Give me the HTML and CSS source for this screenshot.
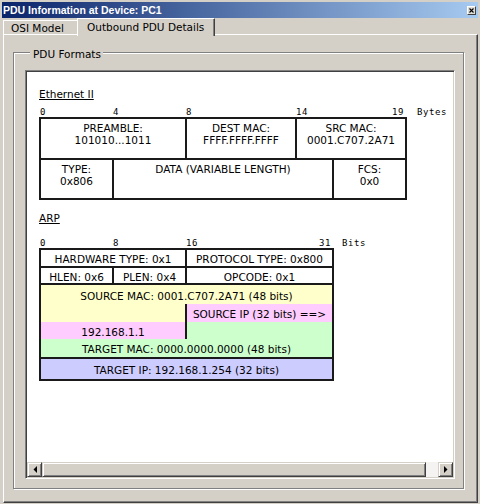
FILE: index.html
```html
<!DOCTYPE html>
<html>
<head>
<meta charset="utf-8">
<link rel="stylesheet" href="styles.css">
</head>
<body>
<div class="window">
  <div class="titlebar">
    <span class="title">PDU Information at Device: PC1</span>
    <span class="close"><svg width="5" height="5" viewBox="0 0 5 5"><path d="M0.5 0.5L4.5 4.5M4.5 0.5L0.5 4.5" stroke="#000" stroke-width="1.1" fill="none"/></svg></span>
  </div>
  <div class="tabs">
    <div class="tab">OSI Model</div>
    <div class="tab active">Outbound PDU Details</div>
  </div>
  <div class="panel">
    <div class="group">
      <div class="legend">PDU Formats</div>
      <div class="view">
        <div class="canvas">
          <div class="label">Ethernet II</div>
          <div class="nums"><span class="w73">0</span><span class="w73">4</span><span class="w110">8</span><span class="w96">14</span><span class="w25">19</span><span>Bytes</span></div>
          <div class="eth">
            <div class="row bb r1">
              <div class="c br w146">PREAMBLE:<br>101010...1011</div>
              <div class="c br w110">DEST MAC:<br>FFFF.FFFF.FFFF</div>
              <div class="c grow">SRC MAC:<br>0001.C707.2A71</div>
            </div>
            <div class="row r2">
              <div class="c br w73">TYPE:<br>0x806</div>
              <div class="c br w220">DATA (VARIABLE LENGTH)</div>
              <div class="c grow">FCS:<br>0x0</div>
            </div>
          </div>

          <div class="label arp-label">ARP</div>
          <div class="nums arp-nums"><span class="w73">0</span><span class="w73">8</span><span class="w133">16</span><span class="w23">31</span><span>Bits</span></div>
          <div class="arp">
            <div class="row bb a1">
              <div class="c br w146">HARDWARE TYPE: 0x1</div>
              <div class="c grow">PROTOCOL TYPE: 0x800</div>
            </div>
            <div class="row bb a2">
              <div class="c br w73">HLEN: 0x6</div>
              <div class="c br w73">PLEN: 0x4</div>
              <div class="c grow">OPCODE: 0x1</div>
            </div>
            <div class="row c a3 yellow">SOURCE MAC: 0001.C707.2A71 (48 bits)</div>
            <div class="row a4">
              <div class="c br w146 yellow"></div>
              <div class="c grow pink">SOURCE IP (32 bits) ==&gt;</div>
            </div>
            <div class="row a5">
              <div class="c br w146 pink">192.168.1.1</div>
              <div class="c grow green"></div>
            </div>
            <div class="row c bb a6 green">TARGET MAC: 0000.0000.0000 (48 bits)</div>
            <div class="row c a7 blue">TARGET IP: 192.168.1.254 (32 bits)</div>
          </div>
        </div>
        <div class="hscroll">
          <div class="sbtn"><svg width="4" height="7" viewBox="0 0 4 7"><path d="M4 0V7L0.5 3.5Z" fill="#000"/></svg></div>
          <div class="thumb"></div>
          <div class="track"></div>
          <div class="sbtn"><svg width="4" height="7" viewBox="0 0 4 7"><path d="M0 0V7L3.5 3.5Z" fill="#000"/></svg></div>
        </div>
      </div>
    </div>
  </div>
</div>
</body>
</html>
```
FILE: styles.css
```css
* { box-sizing: border-box; margin: 0; padding: 0; }
html, body { width: 480px; height: 504px; }
body {
  background: #d4d0c8;
  font-family: "DejaVu Sans", Verdana, sans-serif;
  font-size: 10.5px;
  color: #000;
  overflow: hidden;
}
.window { padding: 2px 2px 0 2px; }

.titlebar {
  height: 16px;
  background: linear-gradient(to right, #0a246a, #a6caf0);
  display: flex;
  align-items: center;
  justify-content: space-between;
  padding: 0 2px 0 1px;
}
.title {
  color: #fff;
  font-family: "Liberation Sans", Arial, sans-serif;
  font-weight: bold;
  font-size: 10.5px;
  line-height: 16px;
  white-space: nowrap;
}
.close {
  width: 9px;
  height: 9px;
  background: #dedcd6;
  border: 1px solid;
  border-color: #fff #404040 #404040 #fff;
  display: flex;
  align-items: center;
  justify-content: center;
}
.close svg { display: block; }

.tabs {
  display: flex;
  align-items: flex-end;
  height: 16px;
  padding-left: 1px;
}
.tab {
  width: 76px;
  height: 14px;
  border-top: 1px solid #fff;
  border-left: 1px solid #fff;
  border-right: 1px solid #404040;
  padding: 2px 0 0 7px;
  line-height: 11px;
  white-space: nowrap;
}
.tab.active {
  position: relative;
  z-index: 1;
  width: 138px;
  height: 18px;
  margin-left: -2px;
  margin-bottom: -2px;
  padding: 3px 0 0 9px;
  background: #d4d0c8;
  box-shadow: inset -1px 0 #808080;
}

.panel {
  margin-left: 1px;
  height: 469px;
  border-top: 1px solid #fff;
  border-left: 1px solid #fff;
  border-right: 1px solid #404040;
  border-bottom: 1px solid #404040;
  box-shadow: inset -1px -1px #808080;
  padding: 17px 13px 13px 9px;
  display: flex;
  flex-direction: column;
}
.group {
  flex: 1;
  border: 1px solid #808080;
  box-shadow: inset 1px 1px #fff, 1px 1px #fff;
  padding: 0 8px 9px 11px;
  display: flex;
  flex-direction: column;
}
.legend {
  align-self: flex-start;
  margin: -6px 0 0 5px;
  padding: 0 2px 0 3px;
  background: #d4d0c8;
  line-height: 14px;
}
.view {
  margin-top: 9px;
  flex: 1;
  display: flex;
  flex-direction: column;
  background: #fff;
  border: 1px solid;
  border-color: #808080 #fff #fff #808080;
  box-shadow: inset 1px 1px #404040, inset -1px -1px #d4d0c8;
  padding: 1px;
  overflow: hidden;
}
.canvas {
  flex: 1;
  padding: 15px 0 0 12px;
}

.label {
  line-height: 14px;
  text-decoration: underline;
}
.arp-label { margin-top: 11px; }
.nums {
  display: flex;
  font-family: "DejaVu Sans Mono", monospace;
  font-size: 9px;
  letter-spacing: 0.6px;
  line-height: 10px;
  height: 10px;
  margin-top: 6px;
  padding-left: 1px;
  white-space: nowrap;
}
.arp-nums { margin-top: 13px; }
.nums span { flex: none; }
.w73 { width: 73px; flex: none; }
.w110 { width: 110px; flex: none; }
.w96 { width: 96px; flex: none; }
.w25 { width: 25px; flex: none; }
.w133 { width: 133px; flex: none; }
.w23 { width: 23px; flex: none; }
.w146 { width: 146px; flex: none; }
.w220 { width: 220px; flex: none; }
.grow { flex: 1; }

.eth, .arp { border: 2px solid #1a1a1a; }
.eth { width: 368px; }
.arp { width: 295px; }
.row { display: flex; }
.bb { border-bottom: 2px solid #1a1a1a; }
.br { border-right: 2px solid #1a1a1a; }
.c { text-align: center; white-space: nowrap; line-height: 12px; }

.eth .r1 { height: 41px; }
.eth .r2 { height: 38px; }
.eth .c { padding-top: 3px; }

.arp .c {
  display: flex;
  align-items: center;
  justify-content: center;
  padding-top: 2px;
}
.a1 { height: 18px; }
.a2 { height: 17px; }
.a3 { height: 19px; }
.a4 { height: 18px; }
.a5 { height: 17px; }
.a6 { height: 20px; }
.a7 { height: 20px; }

.yellow { background: #ffffcc; }
.pink { background: #ffccff; }
.green { background: #ccffcc; }
.blue { background: #ccccff; }

.hscroll {
  display: flex;
  height: 15px;
  flex: none;
}
.sbtn, .thumb {
  height: 15px;
  background: #d4d0c8;
  border: 1px solid;
  border-color: #d4d0c8 #404040 #404040 #d4d0c8;
  box-shadow: inset 1px 1px #fff, inset -1px -1px #808080;
}
.sbtn {
  width: 15px;
  flex: none;
  display: flex;
  align-items: center;
  justify-content: center;
}
.sbtn svg { display: block; }
.thumb { width: 384px; flex: none; }
.track { flex: 1; background: #f4f3f1; }
```
